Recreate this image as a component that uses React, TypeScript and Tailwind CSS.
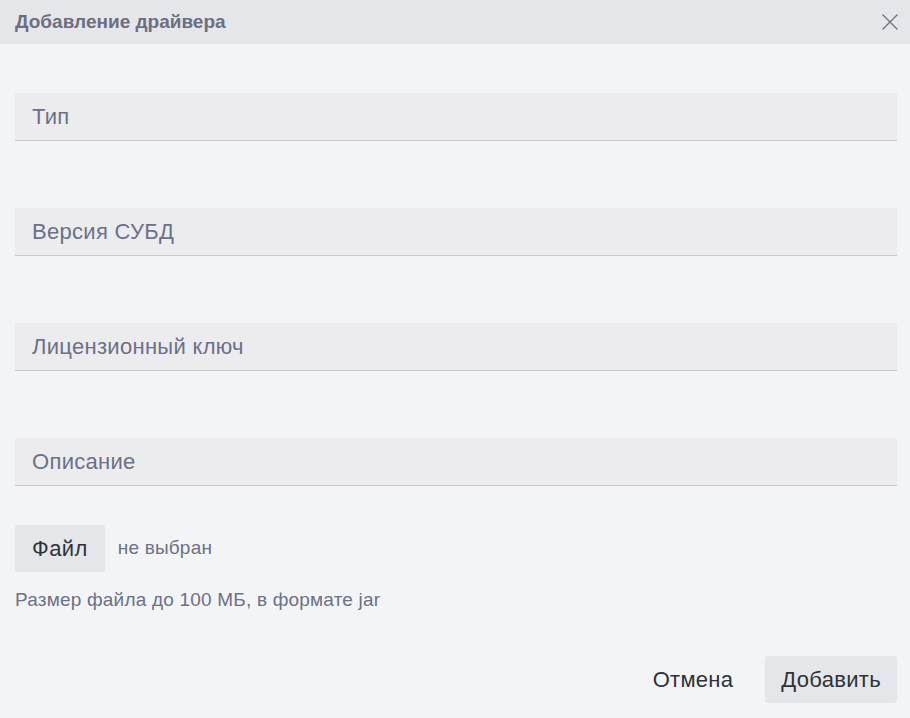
import React from 'react';

const fields = ['Тип', 'Версия СУБД', 'Лицензионный ключ', 'Описание'];

const Field = ({ label }: { label: string }) => (
  <div className="h-[48px] bg-[#ececef] border-b border-[#c9cad0] flex items-center px-[17px]">
    <span className="text-[22px] tracking-[0.3px] text-[#6b7186]">{label}</span>
  </div>
);

export default function App() {
  return (
    <div className="w-[910px] h-[718px] bg-[#f3f4f6] flex flex-col font-['Helvetica','Liberation_Sans',Arial,sans-serif]">
      <div className="h-[44px] bg-[#e5e6ea] flex items-center justify-between pl-[15px] pr-[12px]">
        <h1 className="text-[19px] font-bold text-[#6b6f80]">Добавление драйвера</h1>
        <button className="w-[16px] h-[16px]" aria-label="Закрыть">
          <svg viewBox="0 0 16 16" width="16" height="16" fill="none" stroke="#6b7080" strokeWidth="1.3">
            <path d="M0.5 0.5 L15.5 15.5 M15.5 0.5 L0.5 15.5" />
          </svg>
        </button>
      </div>
      <div className="flex-1 flex flex-col px-[15px] pr-[13px] pt-[49px]">
        <div className="flex flex-col gap-[67px]">
          {fields.map(f => (
            <Field key={f} label={f} />
          ))}
        </div>
        <div className="flex items-center mt-[39px] gap-[13px]">
          <button className="h-[47px] px-[17px] bg-[#e5e6ea] rounded-[3px] text-[22px] tracking-[0.4px] text-[#2f3237]">Файл</button>
          <span className="text-[19px] tracking-[0.2px] text-[#6b7186]">не выбран</span>
        </div>
        <p className="mt-[14px] text-[19px] tracking-[0.2px] text-[#6b7186]">Размер файла до 100 МБ, в формате jar</p>
        <div className="mt-auto mb-[15px] flex justify-end items-center gap-[16px]">
          <button className="h-[47px] px-[16px] text-[22px] tracking-[0.3px] text-[#2f3237]">Отмена</button>
          <button className="h-[47px] px-[16px] bg-[#e5e6ea] rounded-[3px] text-[22px] tracking-[0.3px] text-[#2f3237]">Добавить</button>
        </div>
      </div>
    </div>
  );
}
